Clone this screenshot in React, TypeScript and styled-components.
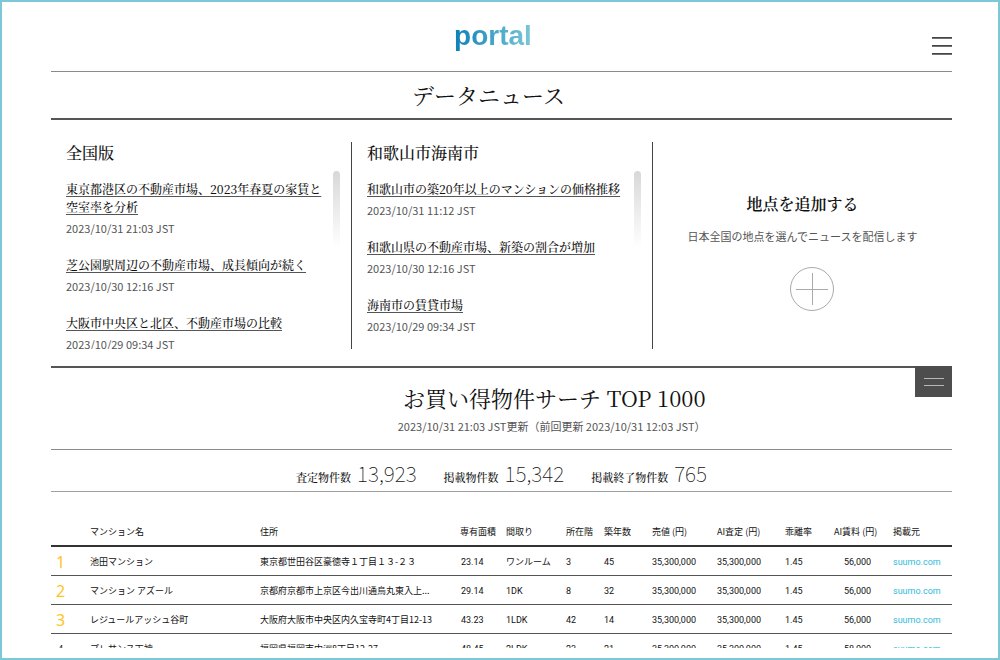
import React from 'react';
import styled, { createGlobalStyle } from 'styled-components';

const sans = '"Noto Sans CJK JP", sans-serif';
const mincho = '"Noto Serif CJK JP", "Noto Sans CJK JP", serif';

const GlobalStyle = createGlobalStyle`
  *, *::before, *::after { box-sizing: border-box; }
  body { margin: 0; background: #fff; color: #111; font-family: ${sans}; }
  h1, h2, h3, p, ul, dl, dd { margin: 0; padding: 0; font-weight: 400; }
  button { padding: 0; border: 0; background: none; cursor: pointer; }
`;

const Page = styled.div`
  display: flex;
  flex-direction: column;
  height: 100vh;
  padding: 0 46px 10px 49px;
  border: 2px solid #7cc8d6;
`;

const Header = styled.header`
  display: grid;
  grid-template-columns: 1fr auto 1fr;
  flex: none;
  height: 70px;
  border-bottom: 1px solid #8a8a8a;
`;

const Logo = styled.a`
  grid-column: 2;
  align-self: start;
  margin: 16px 17px 0 0;
  font: 700 28px/36px "Liberation Sans", sans-serif;
  color: transparent;
  text-decoration: none;
  background: linear-gradient(90deg, #0c80b8, #7cc8d6);
  background-clip: text;
`;

const MenuButton = styled.button`
  justify-self: end;
  align-self: start;
  height: 18px;
  margin-top: 35px;
`;

const Icon = styled.svg`
  display: block;
`;

const PageTitle = styled.h1`
  flex: none;
  padding: 0 26px 0 0;
  border-bottom: 2px solid #555;
  font: 400 22px/46px ${mincho};
  text-align: center;
`;

const News = styled.section`
  display: grid;
  grid-template-columns: 301fr 301fr 299fr;
  flex: none;
  padding: 22px 0 17px;
  border-bottom: 2px solid #555;
`;

const NewsColumn = styled.div`
  display: flex;
  flex-direction: column;
  height: 207px;
  padding: 0 11px 0 15px;
  border-right: 1px solid #444;
`;

const AreaTitle = styled.h2`
  flex: none;
  padding-bottom: 7px;
  font: 500 16px/22px ${mincho};
`;

const NewsScroll = styled.div`
  display: flex;
  flex: 1;
  gap: 7px;
  min-height: 0;
`;

const NewsList = styled.ul`
  flex: 1;
  padding-top: 9px;
  overflow: hidden;
  list-style: none;
`;

const NewsItem = styled.li`
  padding-bottom: 19px;
`;

const Headline = styled.a`
  display: block;
  margin-bottom: 3px;
  font: 500 12px/18px ${mincho};
  color: #111;
  text-decoration: underline;
  text-decoration-thickness: 1px;
  text-decoration-color: #555;
  text-underline-offset: 2px;
`;

const Stamp = styled.time`
  display: block;
  font-size: 11px;
  line-height: 18px;
  color: #555;
`;

const ScrollThumb = styled.div`
  flex: none;
  width: 7px;
  height: 77px;
  border-radius: 4px;
  background: linear-gradient(#d8d8d8, #fff);
`;

const AddPlace = styled.div`
  display: flex;
  flex-direction: column;
  align-items: center;
  padding-top: 50px;
`;

const AddTitle = styled.h2`
  font: 600 16px/24px ${mincho};
`;

const AddNote = styled.p`
  margin: 10px 0 21px;
  font-size: 11px;
  line-height: 20px;
  color: #555;
`;

const AddButton = styled.button`
  margin-left: 18px;
`;

const SearchHead = styled.section`
  display: flex;
  flex-direction: column;
  flex: none;
  position: relative;
  height: 82px;
  border-bottom: 1px solid #8a8a8a;
`;

const SectionMenu = styled.button`
  position: absolute;
  top: -2px;
  right: 0;
  display: grid;
  place-items: center;
  width: 37px;
  height: 31px;
  background: #4d4d4d;
`;

const SearchTitle = styled.h2`
  width: 408px;
  margin: 13px auto 0;
  font: 400 22px/34px ${mincho};
  text-align: right;
`;

const Updated = styled.p`
  width: 408px;
  margin: 1px auto 0;
  font-size: 11px;
  line-height: 20px;
  color: #555;
  text-align: right;
`;

const Stats = styled.dl`
  display: flex;
  flex: none;
  justify-content: center;
  gap: 27px;
  height: 42px;
  border-bottom: 1px solid #a0a0a0;
`;

const Stat = styled.div`
  display: flex;
  align-items: baseline;
  gap: 6px;
`;

const StatName = styled.dt`
  font: 500 11px/46px ${mincho};
`;

const StatValue = styled.dd`
  font: 100 21px/46px ${sans};
`;

const TableArea = styled.section`
  flex: 1;
  min-height: 0;
  overflow: hidden;
`;

const Table = styled.table`
  width: 100%;
  table-layout: fixed;
  border-collapse: separate;
  border-spacing: 0;
  font-size: 9px;
  line-height: 12px;
`;

const Col = styled.col<{ $w?: number }>`
  width: ${({ $w }) => ($w ? `${$w}px` : 'auto')};
`;

const Th = styled.th`
  height: 55px;
  padding: 34px 0 7px;
  border-bottom: 2px solid #333;
  font-weight: 400;
  text-align: left;
  white-space: nowrap;
`;

const Td = styled.td<{ $num?: boolean; $indent?: number }>`
  height: 29px;
  padding: 2px 0 0 ${({ $indent = 0 }) => $indent}px;
  border-bottom: 1px solid #555;
  font-family: ${({ $num }) => ($num ? `Roboto, ${sans}` : sans)};
  white-space: nowrap;
`;

const Rank = styled(Td)<{ $top: boolean }>`
  padding-left: ${({ $top }) => ($top ? 5 : 7)}px;
  font-family: "Noto Sans", sans-serif;
  font-size: ${({ $top }) => ($top ? 16 : 9)}px;
  color: ${({ $top }) => ($top ? '#ffc423' : '#111')};
`;

const Source = styled.a`
  color: #2fbbdb;
  text-decoration: none;
`;

type Article = { title: string; at: string };

const areas: { name: string; articles: Article[] }[] = [
  {
    name: '全国版',
    articles: [
      { title: '東京都港区の不動産市場、2023年春夏の家賃と空室率を分析', at: '2023/10/31 21:03 JST' },
      { title: '芝公園駅周辺の不動産市場、成長傾向が続く', at: '2023/10/30 12:16 JST' },
      { title: '大阪市中央区と北区、不動産市場の比較', at: '2023/10/29 09:34 JST' },
    ],
  },
  {
    name: '和歌山市海南市',
    articles: [
      { title: '和歌山市の築20年以上のマンションの価格推移', at: '2023/10/31 11:12 JST' },
      { title: '和歌山県の不動産市場、新築の割合が増加', at: '2023/10/30 12:16 JST' },
      { title: '海南市の賃貸市場', at: '2023/10/29 09:34 JST' },
    ],
  },
];

const stats = [
  ['査定物件数', '13,923'],
  ['掲載物件数', '15,342'],
  ['掲載終了物件数', '765'],
];

const widths = [39, 170, 0, 46, 60, 38, 48, 65, 68, 49, 59, 59];
const heads = ['', 'マンション名', '住所', '専有面積', '間取り', '所在階', '築年数', '売値 (円)', 'AI査定 (円)', '乖離率', 'AI賃料 (円)', '掲載元'];

const rows = [
  ['池田マンション', '東京都世田谷区豪徳寺１丁目１３-２３', '23.14', 'ワンルーム', '3', '45', '56,000'],
  ['マンション アズール', '京都府京都市上京区今出川通烏丸東入上...', '29.14', '1DK', '8', '32', '56,000'],
  ['レジュールアッシュ谷町', '大阪府大阪市中央区内久宝寺町4丁目12-13', '43.23', '1LDK', '42', '14', '56,000'],
  ['プレサンス天神', '福岡県福岡市中洲8丁目12-27', '48.45', '2LDK', '23', '21', '58,000'],
];

export default function App() {
  return (
    <Page>
      <GlobalStyle />
      <Header>
        <Logo href="#">portal</Logo>
        <MenuButton aria-label="メニュー">
          <Icon width="20" height="18" viewBox="0 0 20 18" stroke="#444" strokeWidth="1.6">
            <path d="M0 .9h20M0 8.9h20M0 16.9h20" />
          </Icon>
        </MenuButton>
      </Header>
      <PageTitle>データニュース</PageTitle>
      <News>
        {areas.map((area) => (
          <NewsColumn key={area.name}>
            <AreaTitle>{area.name}</AreaTitle>
            <NewsScroll>
              <NewsList>
                {area.articles.map((a) => (
                  <NewsItem key={a.title}>
                    <Headline href="#">{a.title}</Headline>
                    <Stamp>{a.at}</Stamp>
                  </NewsItem>
                ))}
              </NewsList>
              <ScrollThumb />
            </NewsScroll>
          </NewsColumn>
        ))}
        <AddPlace>
          <AddTitle>地点を追加する</AddTitle>
          <AddNote>日本全国の地点を選んでニュースを配信します</AddNote>
          <AddButton aria-label="地点を追加">
            <Icon width="44" height="44" viewBox="0 0 44 44" fill="none" stroke="#aaa" strokeWidth="1">
              <circle cx="22" cy="22" r="21.5" />
              <path d="M6 22.5h32M22.5 6v32" />
            </Icon>
          </AddButton>
        </AddPlace>
      </News>
      <SearchHead>
        <SectionMenu aria-label="並べ替え">
          <Icon width="20" height="9" viewBox="0 0 20 9" stroke="#b8b8b8" strokeWidth="1">
            <path d="M0 1.5h20M0 8.5h20" />
          </Icon>
        </SectionMenu>
        <SearchTitle>お買い得物件サーチ TOP 1000</SearchTitle>
        <Updated>2023/10/31 21:03 JST更新（前回更新 2023/10/31 12:03 JST）</Updated>
      </SearchHead>
      <Stats>
        {stats.map(([name, value]) => (
          <Stat key={name}>
            <StatName>{name}</StatName>
            <StatValue>{value}</StatValue>
          </Stat>
        ))}
      </Stats>
      <TableArea>
        <Table>
          <colgroup>
            {widths.map((w, i) => (
              <Col key={i} $w={w} />
            ))}
          </colgroup>
          <thead>
            <tr>
              {heads.map((h, i) => (
                <Th key={i} scope="col">{h}</Th>
              ))}
            </tr>
          </thead>
          <tbody>
            {rows.map(([name, address, area, layout, floor, age, rent], i) => (
              <tr key={name}>
                <Rank $top={i < 3}>{i + 1}</Rank>
                <Td>{name}</Td>
                <Td>{address}</Td>
                <Td $num $indent={1}>{area}</Td>
                <Td $num>{layout}</Td>
                <Td $num>{floor}</Td>
                <Td $num>{age}</Td>
                <Td $num>35,300,000</Td>
                <Td $num>35,300,000</Td>
                <Td $num>1.45</Td>
                <Td $num $indent={10}>{rent}</Td>
                <Td $num>
                  <Source href="#">suumo.com</Source>
                </Td>
              </tr>
            ))}
          </tbody>
        </Table>
      </TableArea>
    </Page>
  );
}
